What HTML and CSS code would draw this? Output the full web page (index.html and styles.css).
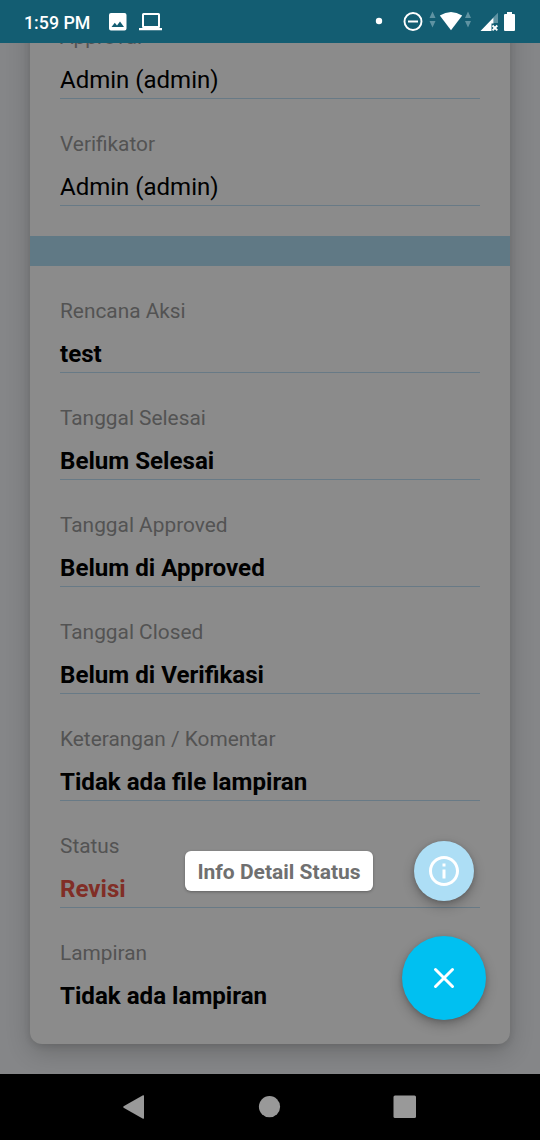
FILE: index.html
```html
<!DOCTYPE html>
<html lang="id">
<head>
<meta charset="utf-8">
<title>Detail</title>
<link rel="stylesheet" href="styles.css">
</head>
<body>
<div class="screen">
  <header class="statusbar">
    <span class="clock">1:59 PM</span>
    <svg class="icons" width="440" height="43" viewBox="100 0 440 43" fill="#fff">
      <path fill-rule="evenodd" d="M111 13h13.500q2 0 2 2v13.500q0 2-2 2h-13.500q-2 0-2-2v-13.500q0-2 2-2zM111.500 27h12.500l-4-5.500-3 4-2.200-2.700z"/>
      <path fill-rule="evenodd" d="M143.500 13h15q1.500 0 1.500 1.500v12q0 1.200-.8 1.500h2.800v2.300h-23v-2.300h3.800q-.8-.3-.8-1.500v-12q0-1.500 1.500-1.500zM144 15v11h14v-11z"/>
      <circle cx="379" cy="21" r="3.200"/>
      <circle cx="413" cy="21.500" r="8.500" fill="none" stroke="#fff" stroke-width="1.900"/>
      <path d="M408 20.500h10v2h-10z"/>
      <path class="faint" d="M432.500 11.500l3 6.500h-6zM432.500 27.500l3-6.500h-6zM468 11.500l3 6.500h-6zM468 27.500l3-6.500h-6z"/>
      <path d="M439.800 15.500Q451 8.500 462.200 15.500L451 30.300z"/>
      <path class="faint" d="M498 12.800v10.200h-4.500v-5.700z"/>
      <path d="M480.500 31l13-13.500v6h-2v7.500z"/>
      <path d="M492.500 25.500l4.800 4.800m0-4.800l-4.800 4.800" stroke="#fff" stroke-width="1.900"/>
      <path d="M507 12h5v2h2q1 0 1 1v15q0 1-1 1h-9q-1 0-1-1v-15q0-1 1-1h2z"/>
    </svg>
  </header>

  <main class="content">
    <section class="card">
      <div class="field regular"><span class="label">Approval</span><span class="value">Admin (admin)</span></div>
      <div class="field regular"><span class="label">Verifikator</span><span class="value">Admin (admin)</span></div>
      <div class="divider"></div>
      <div class="field"><span class="label">Rencana Aksi</span><span class="value">test</span></div>
      <div class="field"><span class="label">Tanggal Selesai</span><span class="value">Belum Selesai</span></div>
      <div class="field"><span class="label">Tanggal Approved</span><span class="value">Belum di Approved</span></div>
      <div class="field"><span class="label">Tanggal Closed</span><span class="value">Belum di Verifikasi</span></div>
      <div class="field"><span class="label">Keterangan / Komentar</span><span class="value">Tidak ada file lampiran</span></div>
      <div class="field"><span class="label">Status</span><span class="value revision">Revisi</span></div>
      <div class="field last"><span class="label">Lampiran</span><span class="value">Tidak ada lampiran</span></div>
    </section>
    <div class="actions">
      <div class="action-row">
        <span class="tooltip">Info Detail Status</span>
        <div class="fab small">
          <svg width="36" height="36" viewBox="0 0 24 24" fill="#fff"><path d="M11 7h2v2h-2zm0 4h2v6h-2zm1-9C6.480 2 2 6.480 2 12s4.480 10 10 10 10-4.480 10-10S17.520 2 12 2zm0 18c-4.410 0-8-3.590-8-8s3.590-8 8-8 8 3.590 8 8-3.590 8-8 8z"/></svg>
        </div>
      </div>
      <div class="fab large">
        <svg width="22" height="22" viewBox="0 0 22 22" fill="none" stroke="#fff" stroke-width="3" stroke-linecap="round"><path d="M2.500 2.500l17 17M19.500 2.500l-17 17"/></svg>
      </div>
    </div>
  </main>

  <nav class="navbar">
    <svg width="540" height="66" viewBox="0 0 540 66" fill="#999">
      <path d="M143 21.300q1-.5 1 .6v22.200q0 1.100-1 .6l-19.400-11q-1-.7 0-1.400z"/>
      <circle cx="269.500" cy="32.700" r="10.600"/>
      <rect x="393.500" y="21.500" width="22.500" height="22.500" rx="1.500"/>
    </svg>
  </nav>
</div>
</body>
</html>
```

FILE: styles.css
```css
* { box-sizing: border-box; }

body {
  margin: 0;
  font-family: Roboto, "Liberation Sans", sans-serif;
}

.screen {
  display: flex;
  flex-direction: column;
  width: 540px;
  height: 1140px;
  overflow: hidden;
  background: #858688;
}

.statusbar {
  display: flex;
  flex: none;
  height: 43px;
  padding-left: 24px;
  background: #135d72;
  color: #fff;
}

.clock {
  width: 76px;
  flex: none;
  line-height: 45px;
  font-size: 17.800px;
  font-weight: 500;
  white-space: nowrap;
}

.icons { flex: none; }
.faint { fill: #5f93a2; }

.content {
  position: relative;
  flex: 1;
  min-height: 0;
  padding: 0 30px;
  overflow: hidden;
}

.card {
  height: 1052px;
  margin-top: -51px;
  background: #8b8b8b;
  border-radius: 12px;
  box-shadow: 0 8px 24px rgba(0, 0, 0, .2), 0 2px 6px rgba(0, 0, 0, .1);
}

.field {
  display: flex;
  flex-direction: column;
  height: 107px;
  margin: 0 30px;
  padding-top: 31px;
  border-bottom: 1px solid #687a86;
}

.field.last { border-bottom: 0; }

.label {
  height: 28px;
  line-height: 28px;
  font-size: 20.850px;
  color: #535353;
}

.value {
  margin-top: 13px;
  height: 32px;
  line-height: 32px;
  font-size: 24.130px;
  font-weight: 700;
  color: #000;
}

.regular .value {
  font-size: 24px;
  font-weight: 400;
}

.value.revision { color: #812e26; }

.divider {
  height: 30px;
  margin-top: 30px;
  background: #607985;
}

.actions {
  position: absolute;
  right: 54px;
  bottom: 54px;
  display: flex;
  flex-direction: column;
  align-items: flex-end;
  gap: 35px;
}

.action-row {
  display: flex;
  align-items: center;
  gap: 41px;
  margin-right: 12px;
}

.tooltip {
  width: 188px;
  height: 40px;
  border-radius: 6px;
  background: #fff;
  box-shadow: 0 1px 3px rgba(0, 0, 0, .3);
  color: #707070;
  font-size: 21px;
  font-weight: 700;
  line-height: 43px;
  text-align: center;
  white-space: nowrap;
}

.fab {
  display: flex;
  align-items: center;
  justify-content: center;
  border-radius: 50%;
  box-shadow: 0 5px 12px rgba(0, 0, 0, .25), 0 1px 4px rgba(0, 0, 0, .15);
}

.small { width: 60px; height: 60px; background: #addef5; }
.large { width: 84px; height: 84px; background: #00c0f1; }

.navbar {
  flex: none;
  height: 66px;
  background: #000;
}
```
